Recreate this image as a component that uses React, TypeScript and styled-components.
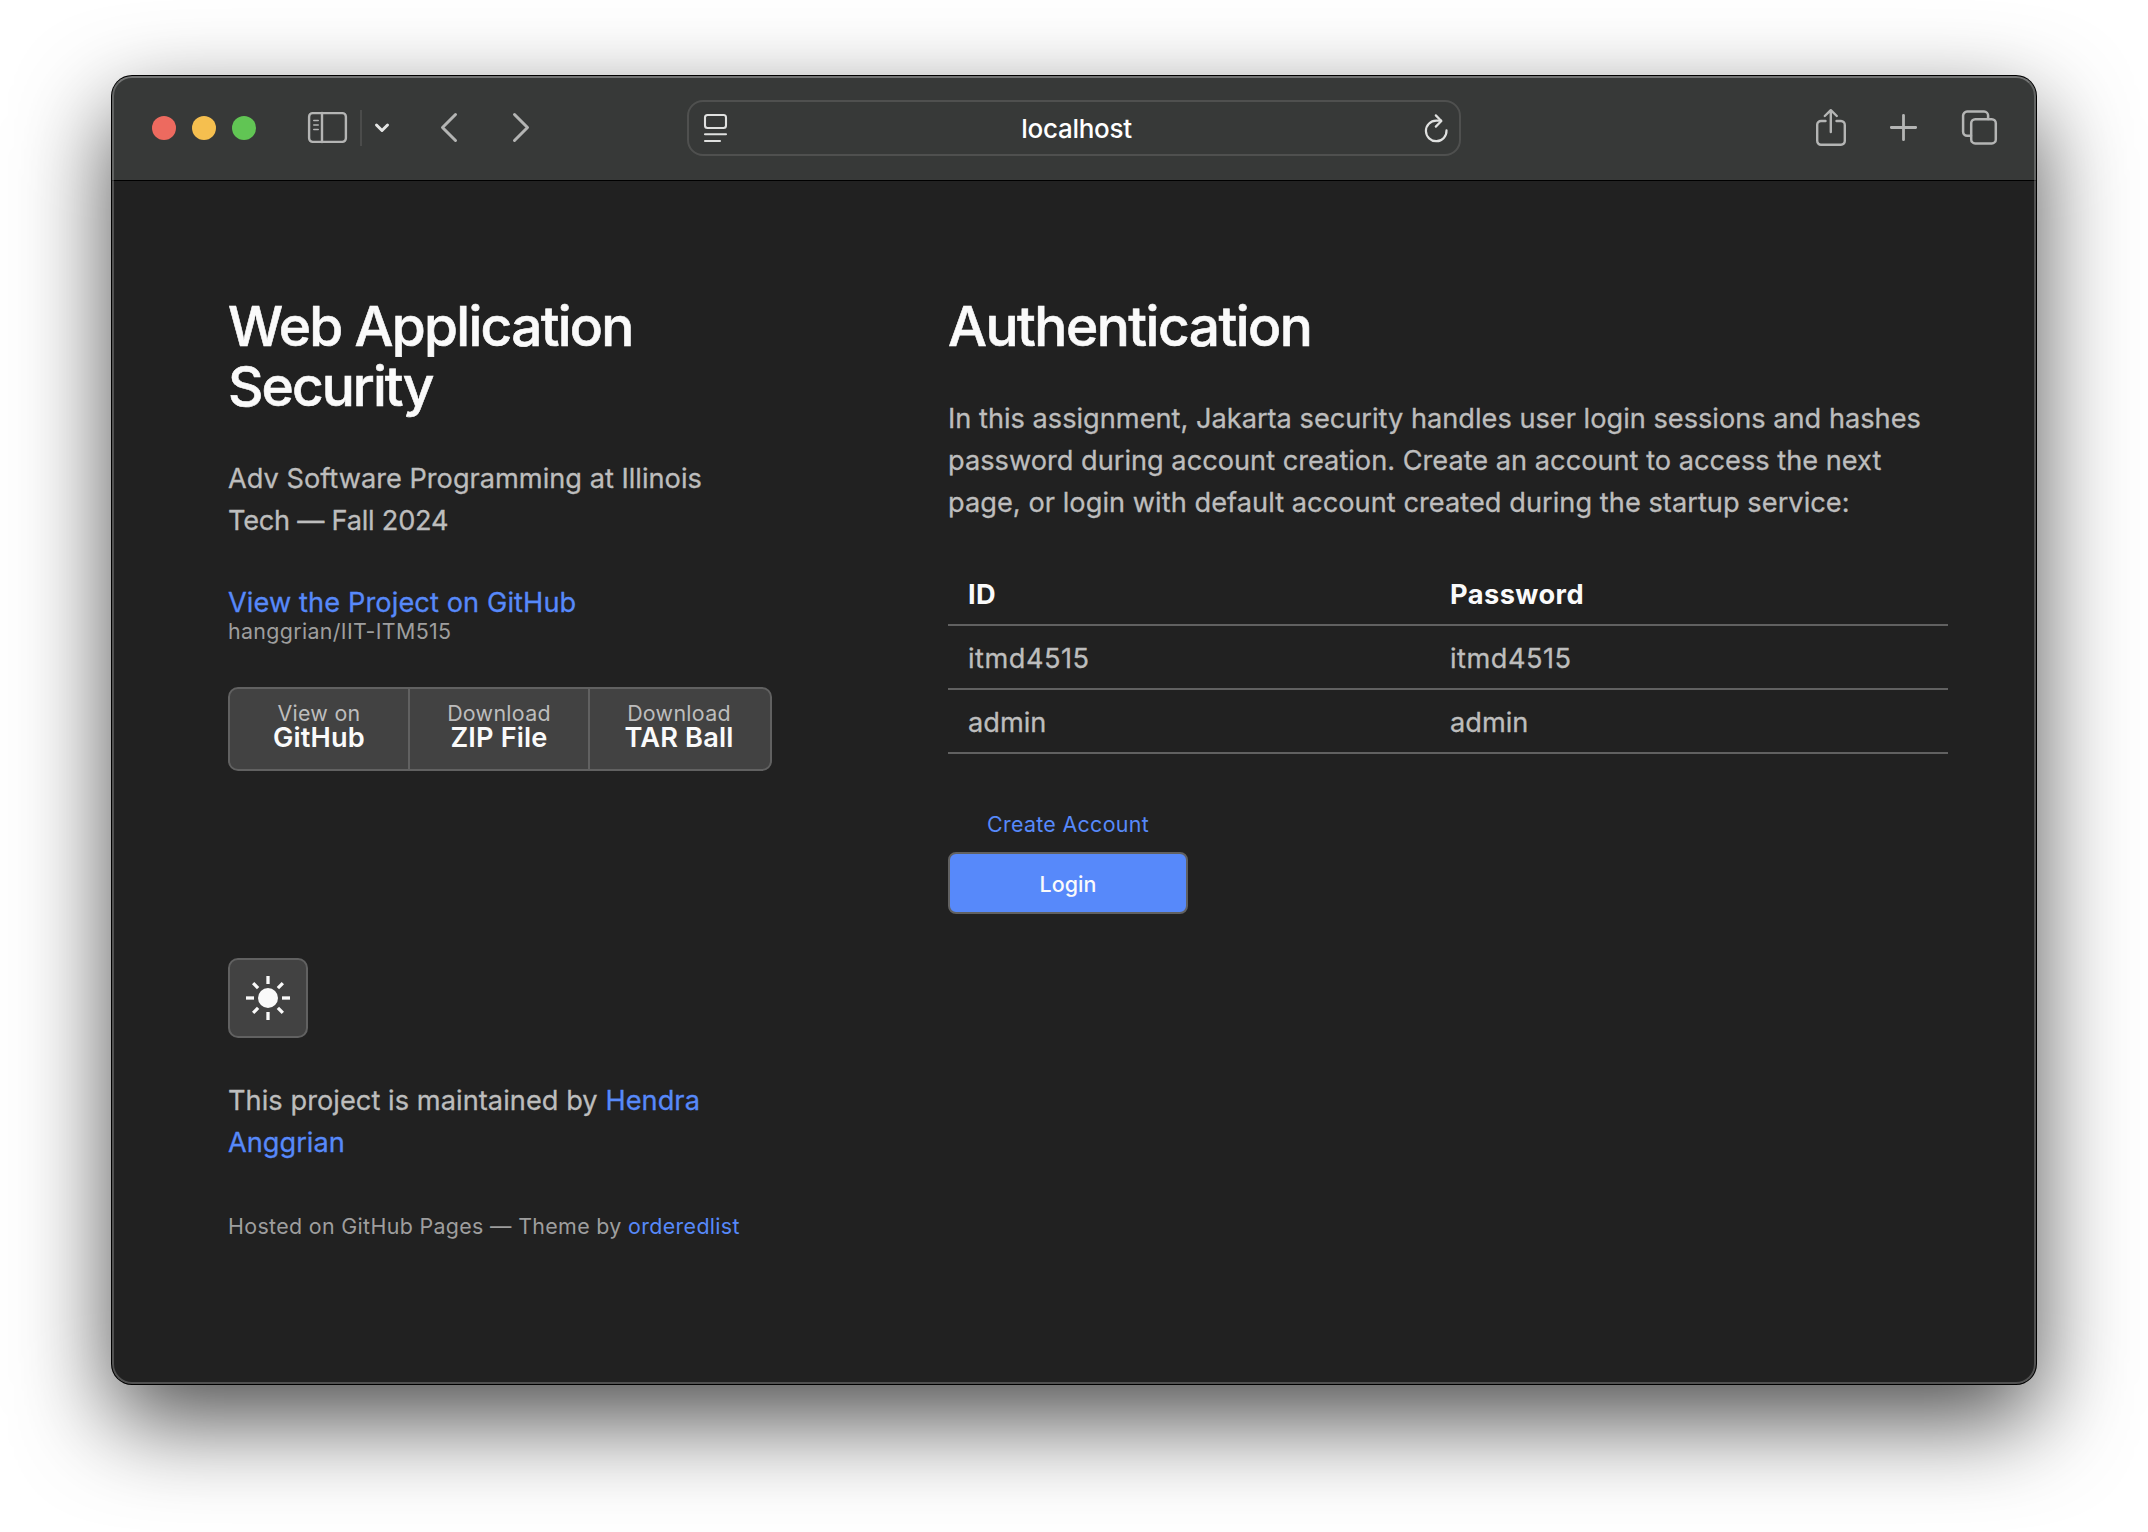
import React from "react";
import styled, { createGlobalStyle } from "styled-components";

const Global = createGlobalStyle`
  *, *::before, *::after { box-sizing: border-box; }
  html, body { margin: 0; padding: 0; background: #fff; }
  body {
    font-family: Inter, "Liberation Sans", sans-serif;
    -webkit-font-smoothing: antialiased;
    overflow: hidden;
  }
  h1, p, ul { margin: 0; padding: 0; }
`;

const Desktop = styled.div`
  width: 2148px;
  height: 1532px;
  padding: 76px 112px 0;
  overflow: hidden;
`;

const Window = styled.div`
  position: relative;
  width: 1924px;
  height: 1308px;
  border-radius: 20px;
  background: #212121;
  box-shadow: 0 0 0 1px #000, 0 36px 94px rgba(0, 0, 0, 0.7);
  display: flex;
  flex-direction: column;
  overflow: hidden;

  &::after {
    content: "";
    position: absolute;
    inset: 0;
    border: 2px solid rgba(255, 255, 255, 0.22);
    border-top-color: rgba(255, 255, 255, 0.3);
    border-radius: 20px;
    pointer-events: none;
  }
`;

const Toolbar = styled.header`
  flex: none;
  height: 105px;
  background: #373938;
  border-bottom: 1px solid #000;
  display: grid;
  grid-template-columns: 575px 774px 1fr;
  align-items: center;
  color: #b4b5b4;

  svg { display: block; overflow: visible; }
`;

const ToolGroup = styled.div<{ $end?: boolean }>`
  display: flex;
  align-items: center;
  padding-left: ${(p) => (p.$end ? 0 : 40)}px;
  padding-right: ${(p) => (p.$end ? 39 : 0)}px;
  justify-content: ${(p) => (p.$end ? "flex-end" : "flex-start")};
`;

const Lights = styled.div`
  display: flex;
  gap: 16px;
  margin-right: 52px;
`;

const Light = styled.span<{ $color: string }>`
  width: 24px;
  height: 24px;
  border-radius: 50%;
  background: ${(p) => p.$color};
`;

const Tool = styled.span<{ $gap?: number; $bright?: boolean }>`
  margin-left: ${(p) => p.$gap ?? 0}px;
  margin-bottom: ${(p) => (p.$bright ? 0 : 2)}px;
  color: ${(p) => (p.$bright ? "#e4e5e4" : "inherit")};
`;

const Separator = styled.span`
  width: 2px;
  height: 36px;
  margin-left: 13px;
  background: #4b4c4b;
`;

const AddressBar = styled.div`
  height: 56px;
  border: 2px solid #4f504f;
  border-radius: 16px;
  display: grid;
  grid-template-columns: 24px 1fr 24px;
  align-items: center;
  padding: 0 10px 0 15px;
  color: #e0e1e0;
`;

const Host = styled.span`
  padding-top: 2px;
  text-align: center;
  color: #fff;
  font-size: 26px;
  font-weight: 500;
  line-height: 40px;
  letter-spacing: -0.28px;
`;

const Page = styled.main`
  flex: 1;
  display: grid;
  grid-template-columns: 544px 1000px;
  column-gap: 176px;
  align-content: start;
  padding: 115px 0 0 116px;
`;

const Column = styled.section`
  display: flex;
  flex-direction: column;
  align-items: flex-start;
`;

const Title = styled.h1`
  margin-bottom: 42px;
  color: #fafafa;
  font-size: 55px;
  font-weight: 500;
  line-height: 60px;
  -webkit-text-stroke: 0.6px;
`;

const Line = styled.span<{ $spacing?: number }>`
  display: block;
  white-space: nowrap;
  letter-spacing: ${(p) => p.$spacing ?? 0}px;
`;

const Text = styled.p`
  color: #bdbdbd;
  font-size: 27.2px;
  line-height: 42px;
  -webkit-text-stroke: 0.3px;
`;

const Link = styled.a`
  color: #5789fa;
`;

const ProjectLink = styled(Text)`
  margin-top: 40px;
  letter-spacing: 0.1px;
`;

const Repo = styled.small`
  margin-top: -7px;
  color: #9e9e9e;
  font-size: 21.4px;
  line-height: 28px;
  letter-spacing: 0.34px;
`;

const Downloads = styled.ul`
  display: flex;
  width: 544px;
  height: 84px;
  margin-top: 42px;
  border: 2px solid #616161;
  border-radius: 10px;
  background: #424242;
  list-style: none;
  overflow: hidden;
`;

const Download = styled.li`
  width: 180px;
  padding-top: 12px;
  border-right: 2px solid #616161;
  text-align: center;
  color: #bdbdbd;
  font-size: 21.4px;
  line-height: 24px;
  letter-spacing: 0.3px;

  &:last-child { border-right-color: transparent; }
`;

const Strong = styled.strong`
  display: block;
  color: #fafafa;
  font-size: 27.2px;
  font-weight: 600;
  line-height: 26px;
  letter-spacing: 0.15px;
`;

const ThemeButton = styled.button`
  width: 80px;
  height: 80px;
  margin: 187px 0 42px;
  padding: 0;
  border: 2px solid #616161;
  border-radius: 10px;
  background: #424242;
  display: flex;
  align-items: center;
  justify-content: center;
`;

const Hosted = styled.small`
  margin-top: 41px;
  color: #9e9e9e;
  font-size: 21.4px;
  line-height: 42px;
  letter-spacing: 0.34px;
`;

const Table = styled.table`
  width: 1000px;
  margin-top: 38px;
  border-collapse: separate;
  border-spacing: 0;
  table-layout: fixed;
  font-size: 27.2px;
  line-height: 42px;
  text-align: left;
  color: #bdbdbd;

  th, td {
    padding: 12px 20px 8px;
    height: 64px;
    border-bottom: 2px solid #616161;
  }
  td { -webkit-text-stroke: 0.3px; }
  th { color: #fafafa; font-weight: 700; letter-spacing: 0.45px; }
  th:first-child { width: 482px; }
`;

const Actions = styled.div`
  display: flex;
  flex-direction: column;
  width: 240px;
  margin-top: 42px;
`;

const Action = styled.button<{ $primary?: boolean }>`
  height: ${(p) => (p.$primary ? 62 : 56)}px;
  padding: ${(p) => (p.$primary ? 1 : 0)}px 0 0;
  border: 2px solid ${(p) => (p.$primary ? "#616161" : "transparent")};
  border-radius: 8px;
  background: ${(p) => (p.$primary ? "#5789fa" : "transparent")};
  color: ${(p) => (p.$primary ? "#fafafa" : "#5789fa")};
  font-family: inherit;
  font-size: 21.4px;
  font-weight: ${(p) => (p.$primary ? 500 : 400)};
  letter-spacing: ${(p) => (p.$primary ? 0.1 : 0.32)}px;
`;

const accounts = [
  { id: "itmd4515", password: "itmd4515", spacing: 0.5 },
  { id: "admin", password: "admin", spacing: 0 },
];

const downloads = [
  ["View on", "GitHub"],
  ["Download", "ZIP File"],
  ["Download", "TAR Ball"],
];

const stroke = {
  fill: "none",
  stroke: "currentColor",
  strokeLinecap: "round" as const,
  strokeLinejoin: "round" as const,
};

const SidebarIcon = () => (
  <svg width="39" height="31" viewBox="0 0 39 31" {...stroke} strokeWidth="2.4">
    <rect x="1.1" y="1.1" width="36.8" height="28.8" rx="3.6" />
    <path d="M14 1v29" />
    <path d="M5.8 8.5h4.4M5.8 13h4.4M5.8 17.5h4.4" strokeWidth="1.6" />
  </svg>
);

const MenuChevron = () => (
  <svg width="14" height="10" viewBox="0 0 14 10" {...stroke} strokeWidth="3">
    <path d="M1.5 2 7 7.5 12.5 2" />
  </svg>
);

const NavChevron = ({ forward }: { forward?: boolean }) => (
  <svg width="16" height="29" viewBox="0 0 16 29" {...stroke} strokeWidth="3">
    <path d={forward ? "M1.5 1.5 14.5 14.5 1.5 27.5" : "M14.5 1.5 1.5 14.5 14.5 27.5"} />
  </svg>
);

const ReaderIcon = () => (
  <svg width="23" height="28" viewBox="0 0 23 28" {...stroke} strokeWidth="2.1">
    <rect x="1" y="1" width="21" height="13" rx="2.5" />
    <path d="M1 20.3h21M1 27h15" />
  </svg>
);

const ReloadIcon = () => (
  <svg width="23" height="28" viewBox="0 0 23 28" {...stroke} strokeWidth="2.2">
    <path d="M21.5 16.4A10.3 10.3 0 1 1 11.2 6.6H16" />
    <path d="M10.8 1.4 16.4 7 10.8 12.6" />
  </svg>
);

const ShareIcon = () => (
  <svg width="30" height="37" viewBox="0 0 30 37" {...stroke} strokeWidth="2.4">
    <path d="M9.5 12H5a3.8 3.8 0 0 0-3.8 3.8v16A3.8 3.8 0 0 0 5 35.7h20a3.8 3.8 0 0 0 3.8-3.8v-16A3.8 3.8 0 0 0 25 12h-4.5" />
    <path d="M14.8 23V1.4M8.8 7l6-5.8L20.8 7" />
  </svg>
);

const PlusIcon = () => (
  <svg width="27" height="27" viewBox="0 0 27 27" {...stroke} strokeWidth="2.8">
    <path d="M13.5 1.3v24.4M1.3 13.5h24.4" />
  </svg>
);

const TabsIcon = () => (
  <svg width="35" height="35" viewBox="0 0 35 35" {...stroke} strokeWidth="2.5">
    <rect x="9.2" y="9.2" width="24.6" height="24.2" rx="4" />
    <path d="M9 25.8H5.1a4 4 0 0 1-4-4V5.6a4 4 0 0 1 4-4h17a4 4 0 0 1 4 4V9" />
  </svg>
);

const SunIcon = () => (
  <svg width="44" height="44" viewBox="-22 -22 44 44">
    <circle r="10" fill="#fafafa" />
    {[0, 45, 90, 135, 180, 225, 270, 315].map((a) => (
      <path
        key={a}
        d={a % 90 ? "M0-14V-21" : "M0-14V-22"}
        transform={`rotate(${a})`}
        stroke="#fafafa"
        strokeWidth="3.3"
      />
    ))}
  </svg>
);

export default function App() {
  return (
    <>
      <Global />
      <Desktop>
        <Window>
          <Toolbar>
            <ToolGroup>
              <Lights>
                <Light $color="#ed6a5f" />
                <Light $color="#f5bf4f" />
                <Light $color="#61c554" />
              </Lights>
              <Tool><SidebarIcon /></Tool>
              <Separator />
              <Tool $gap={13} $bright><MenuChevron /></Tool>
              <Tool $gap={52}><NavChevron /></Tool>
              <Tool $gap={56}><NavChevron forward /></Tool>
            </ToolGroup>
            <AddressBar>
              <ReaderIcon />
              <Host>localhost</Host>
              <ReloadIcon />
            </AddressBar>
            <ToolGroup $end>
              <Tool><ShareIcon /></Tool>
              <Tool $gap={44}><PlusIcon /></Tool>
              <Tool $gap={45}><TabsIcon /></Tool>
            </ToolGroup>
          </Toolbar>
          <Page>
            <Column>
              <Title>
                <Line $spacing={-1.72}>Web Application</Line>
                <Line $spacing={-1.95}>Security</Line>
              </Title>
              <Text>
                <Line>Adv Software Programming at Illinois</Line>
                <Line $spacing={-0.25}>Tech — Fall 2024</Line>
              </Text>
              <ProjectLink><Link>View the Project on GitHub</Link></ProjectLink>
              <Repo>hanggrian/IIT-ITM515</Repo>
              <Downloads>
                {downloads.map(([label, name]) => (
                  <Download key={name}>
                    {label}
                    <Strong>{name}</Strong>
                  </Download>
                ))}
              </Downloads>
              <ThemeButton><SunIcon /></ThemeButton>
              <Text>
                <Line $spacing={0.05}>This project is maintained by <Link>Hendra</Link></Line>
                <Line><Link>Anggrian</Link></Line>
              </Text>
              <Hosted>Hosted on GitHub Pages — Theme by <Link>orderedlist</Link></Hosted>
            </Column>
            <Column>
              <Title><Line $spacing={-1.5}>Authentication</Line></Title>
              <Text>
                <Line>In this assignment, Jakarta security handles user login sessions and hashes</Line>
                <Line>password during account creation. Create an account to access the next</Line>
                <Line $spacing={0.04}>page, or login with default account created during the startup service:</Line>
              </Text>
              <Table>
                <thead>
                  <tr><th>ID</th><th>Password</th></tr>
                </thead>
                <tbody>
                  {accounts.map(({ id, password, spacing }) => (
                    <tr key={id}>
                      <td><Line $spacing={spacing}>{id}</Line></td>
                      <td><Line $spacing={spacing}>{password}</Line></td>
                    </tr>
                  ))}
                </tbody>
              </Table>
              <Actions>
                <Action>Create Account</Action>
                <Action $primary>Login</Action>
              </Actions>
            </Column>
          </Page>
        </Window>
      </Desktop>
    </>
  );
}
